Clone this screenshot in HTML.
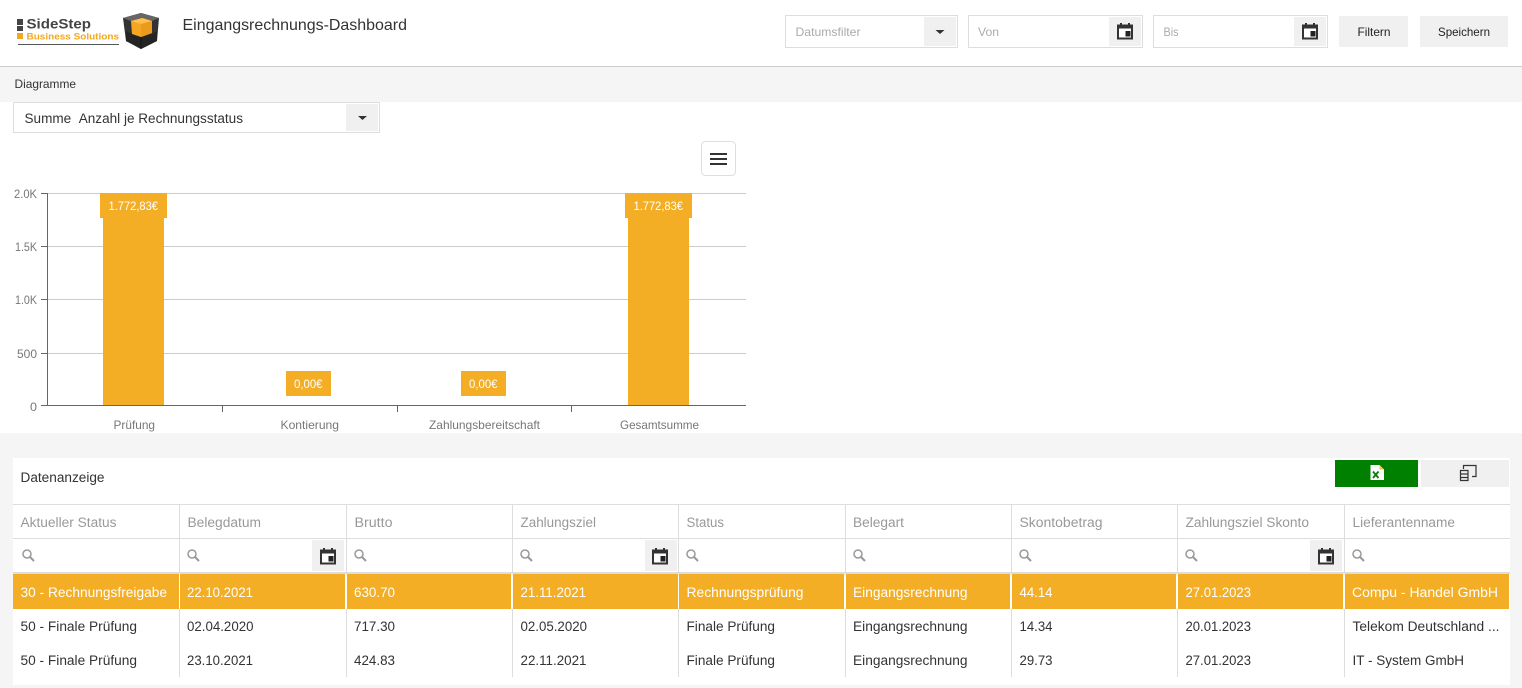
<!DOCTYPE html>
<html lang="de"><head><meta charset="utf-8"><title>Eingangsrechnungs-Dashboard</title>
<style>
html,body{margin:0;padding:0;width:1522px;height:688px;overflow:hidden;background:#fff}
svg{display:block}
text{font-family:"Liberation Sans",sans-serif}
.h{font-size:13.5px;fill:#999}
.c{font-size:13.5px;fill:#333}
.w{font-size:13.5px;fill:#fff}
.a{font-size:12px;fill:#777}
.l{font-size:12px;fill:#fff}
.p{font-size:12px;fill:#aaa}
.b{font-size:12px;fill:#222}
</style></head><body>
<svg xmlns="http://www.w3.org/2000/svg" width="1522" height="688" viewBox="0 0 1522 688">
<defs>
<g id="cal"><rect x="1" y="2.500" width="14" height="13" fill="#fff" stroke="#333" stroke-width="2"/><rect x="0" y="2" width="16" height="3.500" fill="#333"/><rect x="3" y="0" width="2" height="3" fill="#333"/><rect x="11" y="0" width="2" height="3" fill="#333"/><rect x="8.500" y="8" width="5" height="5.500" fill="#222"/></g>
<g id="s"><circle cx="5" cy="5" r="4" fill="none" stroke="#999" stroke-width="1.500"/><path d="M8 8l4 4" stroke="#999" stroke-width="2" fill="none"/></g>
</defs>
<rect width="1522" height="688" fill="#fff"/>
<!-- header -->
<rect x="0" y="66" width="1522" height="1" fill="#ccc"/>
<rect x="0" y="67" width="1522" height="35" fill="#f5f5f5"/>
<rect x="17" y="19" width="6" height="6" fill="#444"/><rect x="17" y="26" width="6" height="5" fill="#444"/><rect x="17" y="33" width="6" height="6" fill="#f3a81c"/>
<text x="26.500" y="28.500" font-size="14" font-weight="bold" fill="#444" textLength="64.500" lengthAdjust="spacingAndGlyphs">SideStep</text>
<text x="26.500" y="39.500" font-size="9.500" font-weight="bold" fill="#f3a81c" textLength="92.500" lengthAdjust="spacingAndGlyphs">Business Solutions</text>
<rect x="18" y="44" width="101" height="1" fill="#555"/>
<polygon points="141,13 159,18 157,41 141,49 126,41 123,18" fill="#333"/>
<polygon points="123,18 141,13 159,18 152,21 141,18 131,21" fill="#666"/>
<polygon points="126,31 132,34 141,37 152,34 157,31 157,41 141,49 126,41" fill="#242424"/>
<polygon points="131,21 142,18 152,21 152,33 141,37 132,34" fill="#f5a623"/>
<polygon points="142,18 152,21 152,33 141,37 141,24" fill="#eb9a1c"/>
<polygon points="131,21 142,18 152,21 141,24" fill="#ffbe4d"/>
<path d="M141 37V49" stroke="#111" stroke-width=".8" fill="none"/>
<text x="182.500" y="30" font-size="16" fill="#333" textLength="224.500" lengthAdjust="spacingAndGlyphs">Eingangsrechnungs-Dashboard</text>
<rect x="785.500" y="15.500" width="172" height="32" fill="#fff" stroke="#ddd"/><rect x="924" y="17" width="32" height="29" fill="#f0f0f0"/><path d="M935.500 30h9l-4.500 4z" fill="#333"/>
<text class="p" x="795.500" y="36" textLength="65" lengthAdjust="spacingAndGlyphs">Datumsfilter</text>
<rect x="968.500" y="15.500" width="174" height="32" fill="#fff" stroke="#ddd"/><rect x="1109" y="17" width="32" height="29" fill="#f0f0f0"/><use href="#cal" x="1117" y="23"/>
<text class="p" x="978" y="36" textLength="21" lengthAdjust="spacingAndGlyphs">Von</text>
<rect x="1153.500" y="15.500" width="174" height="32" fill="#fff" stroke="#ddd"/><rect x="1294" y="17" width="32" height="29" fill="#f0f0f0"/><use href="#cal" x="1302" y="23"/>
<text class="p" x="1163.500" y="36" textLength="15" lengthAdjust="spacingAndGlyphs">Bis</text>
<rect x="1339" y="16" width="69" height="31" fill="#f0f0f0"/><text class="b" x="1357.500" y="36" textLength="33" lengthAdjust="spacingAndGlyphs">Filtern</text>
<rect x="1420" y="16" width="88" height="31" fill="#f0f0f0"/><text class="b" x="1438" y="36" textLength="52" lengthAdjust="spacingAndGlyphs">Speichern</text>
<text x="14.500" y="88" font-size="12" fill="#333" textLength="61.500" lengthAdjust="spacingAndGlyphs">Diagramme</text>
<!-- select -->
<rect x="13.500" y="102.500" width="366" height="30" fill="#fff" stroke="#ddd"/><rect x="346" y="104" width="32" height="27" fill="#f0f0f0"/><path d="M358 116h9l-4.500 4z" fill="#333"/>
<text x="24.500" y="123" font-size="13.500" fill="#333" textLength="218.500" lengthAdjust="spacingAndGlyphs">Summe&#160;&#160;Anzahl je Rechnungsstatus</text>
<!-- hamburger -->
<rect x="701.500" y="141.500" width="34" height="34" rx="4" fill="#fff" stroke="#ddd"/>
<rect x="710" y="153" width="17" height="2" fill="#333"/><rect x="710" y="158" width="17" height="2" fill="#333"/><rect x="710" y="163" width="17" height="2" fill="#333"/>
<!-- chart -->
<g fill="#ccc"><rect x="47" y="193" width="699" height="1"/><rect x="47" y="246" width="699" height="1"/><rect x="47" y="299" width="699" height="1"/><rect x="47" y="353" width="699" height="1"/></g>
<g fill="#666"><rect x="47" y="193" width="1" height="213"/><rect x="41" y="405" width="705" height="1"/>
<rect x="41" y="193" width="6" height="1"/><rect x="41" y="246" width="6" height="1"/><rect x="41" y="299" width="6" height="1"/><rect x="41" y="353" width="6" height="1"/>
<rect x="222" y="406" width="1" height="6"/><rect x="397" y="406" width="1" height="6"/><rect x="571" y="406" width="1" height="6"/></g>
<rect x="103" y="218" width="61" height="187" fill="#f3ae25"/><rect x="100" y="193" width="67" height="25" fill="#f3ae25"/>
<rect x="628" y="218" width="61" height="187" fill="#f3ae25"/><rect x="625" y="193" width="67" height="25" fill="#f3ae25"/>
<rect x="286" y="371" width="45" height="25" fill="#f3ae25"/><rect x="461" y="371" width="45" height="25" fill="#f3ae25"/>
<text class="l" x="108.500" y="210" textLength="49.500" lengthAdjust="spacingAndGlyphs">1.772,83€</text>
<text class="l" x="633.500" y="210" textLength="49.500" lengthAdjust="spacingAndGlyphs">1.772,83€</text>
<text class="l" x="294" y="388" textLength="28.500" lengthAdjust="spacingAndGlyphs">0,00€</text>
<text class="l" x="469" y="388" textLength="28.500" lengthAdjust="spacingAndGlyphs">0,00€</text>
<text class="a" x="14" y="198" textLength="23" lengthAdjust="spacingAndGlyphs">2.0K</text>
<text class="a" x="15" y="251" textLength="22" lengthAdjust="spacingAndGlyphs">1.5K</text>
<text class="a" x="15" y="304" textLength="22" lengthAdjust="spacingAndGlyphs">1.0K</text>
<text class="a" x="17" y="358" textLength="20" lengthAdjust="spacingAndGlyphs">500</text>
<text class="a" x="30" y="411" textLength="7" lengthAdjust="spacingAndGlyphs">0</text>
<text class="a" x="113.500" y="429" textLength="41.500" lengthAdjust="spacingAndGlyphs">Prüfung</text>
<text class="a" x="280.500" y="429" textLength="58.500" lengthAdjust="spacingAndGlyphs">Kontierung</text>
<text class="a" x="429" y="429" textLength="111" lengthAdjust="spacingAndGlyphs">Zahlungsbereitschaft</text>
<text class="a" x="620" y="429" textLength="79" lengthAdjust="spacingAndGlyphs">Gesamtsumme</text>
<!-- lower panel -->
<rect x="0" y="433" width="1522" height="255" fill="#f5f5f5"/>
<rect x="13" y="458" width="1497" height="227" fill="#fff"/>
<text x="20.500" y="482" font-size="13.500" fill="#333" textLength="84" lengthAdjust="spacingAndGlyphs">Datenanzeige</text>
<rect x="1335" y="460" width="83" height="27" fill="#008000"/>
<rect x="1421" y="460" width="88" height="27" fill="#f0f0f0"/>
<path d="M1370.500 465h9l4.500 4.500v10.500h-13.500z" fill="#fff"/><path d="M1379.500 465v4.500h4.500z" fill="#e8c84a"/>
<path d="M1373 471.500l5.500 6.500M1378.500 471.500l-5.500 6.500" stroke="#0a7a0a" stroke-width="1.800" fill="none"/>
<path d="M1463.500 469v-3.500h12.500v11h-4" fill="none" stroke="#333" stroke-width="1.200"/>
<path d="M1460.500 470.500h7.500v10h-7.500zM1460.500 474h7.500M1460.500 477.500h7.500" fill="#f0f0f0" stroke="#333" stroke-width="1.200"/>
<!-- table lines -->
<rect x="13" y="504" width="1497" height="1" fill="#ddd"/>
<rect x="13" y="538" width="1497" height="1" fill="#ddd"/>
<rect x="13" y="572" width="1497" height="2" fill="#ddd"/>
<rect x="13" y="574" width="1496" height="35" fill="#f3ae25"/>
<g fill="#ddd"><rect x="179" y="505" width="1" height="69"/><rect x="346" y="505" width="1" height="69"/><rect x="512" y="505" width="1" height="69"/><rect x="678" y="505" width="1" height="69"/><rect x="845" y="505" width="1" height="69"/><rect x="1011" y="505" width="1" height="69"/><rect x="1177" y="505" width="1" height="69"/><rect x="1344" y="505" width="1" height="69"/>
<rect x="179" y="609" width="1" height="68"/><rect x="346" y="609" width="1" height="68"/><rect x="512" y="609" width="1" height="68"/><rect x="678" y="609" width="1" height="68"/><rect x="845" y="609" width="1" height="68"/><rect x="1011" y="609" width="1" height="68"/><rect x="1177" y="609" width="1" height="68"/><rect x="1344" y="609" width="1" height="68"/></g>
<g fill="#fff"><rect x="179" y="574" width="1" height="35"/><rect x="345" y="574" width="2" height="35"/><rect x="511" y="574" width="2" height="35"/><rect x="678" y="574" width="1" height="35"/><rect x="844" y="574" width="2" height="35"/><rect x="1010" y="574" width="2" height="35"/><rect x="1176" y="574" width="2" height="35"/><rect x="1343" y="574" width="2" height="35"/></g>
<!-- header labels -->
<text class="h" x="20.500" y="527" textLength="96" lengthAdjust="spacingAndGlyphs">Aktueller Status</text>
<text class="h" x="187.500" y="527" textLength="73.500" lengthAdjust="spacingAndGlyphs">Belegdatum</text>
<text class="h" x="354.500" y="527" textLength="38" lengthAdjust="spacingAndGlyphs">Brutto</text>
<text class="h" x="520.500" y="527" textLength="75.500" lengthAdjust="spacingAndGlyphs">Zahlungsziel</text>
<text class="h" x="686.500" y="527" textLength="37.500" lengthAdjust="spacingAndGlyphs">Status</text>
<text class="h" x="853" y="527" textLength="51" lengthAdjust="spacingAndGlyphs">Belegart</text>
<text class="h" x="1019.500" y="527" textLength="83" lengthAdjust="spacingAndGlyphs">Skontobetrag</text>
<text class="h" x="1185.500" y="527" textLength="123.500" lengthAdjust="spacingAndGlyphs">Zahlungsziel Skonto</text>
<text class="h" x="1352.500" y="527" textLength="102.500" lengthAdjust="spacingAndGlyphs">Lieferantenname</text>
<!-- filters -->
<use href="#s" x="22" y="549"/><use href="#s" x="187" y="549"/><use href="#s" x="354" y="549"/><use href="#s" x="520" y="549"/><use href="#s" x="686" y="549"/><use href="#s" x="853" y="549"/><use href="#s" x="1019" y="549"/><use href="#s" x="1185" y="549"/><use href="#s" x="1352" y="549"/>
<rect x="312" y="540" width="32" height="31" fill="#f0f0f0"/><use href="#cal" x="320" y="548"/>
<rect x="645" y="540" width="32" height="31" fill="#f0f0f0"/><use href="#cal" x="652" y="548"/>
<rect x="1310" y="540" width="32" height="31" fill="#f0f0f0"/><use href="#cal" x="1318" y="548"/>
<!-- row 1 -->
<text class="w" x="20.500" y="597" textLength="146.500" lengthAdjust="spacingAndGlyphs">30 - Rechnungsfreigabe</text>
<text class="w" x="187" y="597" textLength="66" lengthAdjust="spacingAndGlyphs">22.10.2021</text>
<text class="w" x="354" y="597" textLength="41" lengthAdjust="spacingAndGlyphs">630.70</text>
<text class="w" x="520.500" y="597" textLength="65.500" lengthAdjust="spacingAndGlyphs">21.11.2021</text>
<text class="w" x="686.500" y="597" textLength="117" lengthAdjust="spacingAndGlyphs">Rechnungsprüfung</text>
<text class="w" x="853" y="597" textLength="114.500" lengthAdjust="spacingAndGlyphs">Eingangsrechnung</text>
<text class="w" x="1019.500" y="597" textLength="33" lengthAdjust="spacingAndGlyphs">44.14</text>
<text class="w" x="1185.500" y="597" textLength="65.500" lengthAdjust="spacingAndGlyphs">27.01.2023</text>
<text class="w" x="1352" y="597" textLength="146" lengthAdjust="spacingAndGlyphs">Compu - Handel GmbH</text>
<!-- row 2 -->
<text class="c" x="20.500" y="631" textLength="116.500" lengthAdjust="spacingAndGlyphs">50 - Finale Prüfung</text>
<text class="c" x="187" y="631" textLength="66.500" lengthAdjust="spacingAndGlyphs">02.04.2020</text>
<text class="c" x="354" y="631" textLength="41" lengthAdjust="spacingAndGlyphs">717.30</text>
<text class="c" x="520.500" y="631" textLength="66.500" lengthAdjust="spacingAndGlyphs">02.05.2020</text>
<text class="c" x="686.500" y="631" textLength="88.500" lengthAdjust="spacingAndGlyphs">Finale Prüfung</text>
<text class="c" x="853" y="631" textLength="114.500" lengthAdjust="spacingAndGlyphs">Eingangsrechnung</text>
<text class="c" x="1019.500" y="631" textLength="33" lengthAdjust="spacingAndGlyphs">14.34</text>
<text class="c" x="1185.500" y="631" textLength="65.500" lengthAdjust="spacingAndGlyphs">20.01.2023</text>
<text class="c" x="1352.500" y="631" textLength="147" lengthAdjust="spacingAndGlyphs">Telekom Deutschland ...</text>
<!-- row 3 -->
<text class="c" x="20.500" y="665" textLength="116.500" lengthAdjust="spacingAndGlyphs">50 - Finale Prüfung</text>
<text class="c" x="187" y="665" textLength="66" lengthAdjust="spacingAndGlyphs">23.10.2021</text>
<text class="c" x="354" y="665" textLength="41" lengthAdjust="spacingAndGlyphs">424.83</text>
<text class="c" x="520.500" y="665" textLength="66" lengthAdjust="spacingAndGlyphs">22.11.2021</text>
<text class="c" x="686.500" y="665" textLength="88.500" lengthAdjust="spacingAndGlyphs">Finale Prüfung</text>
<text class="c" x="853" y="665" textLength="114.500" lengthAdjust="spacingAndGlyphs">Eingangsrechnung</text>
<text class="c" x="1019.500" y="665" textLength="33" lengthAdjust="spacingAndGlyphs">29.73</text>
<text class="c" x="1185.500" y="665" textLength="65.500" lengthAdjust="spacingAndGlyphs">27.01.2023</text>
<text class="c" x="1352.500" y="665" textLength="111.500" lengthAdjust="spacingAndGlyphs">IT - System GmbH</text>
</svg>
</body></html>
